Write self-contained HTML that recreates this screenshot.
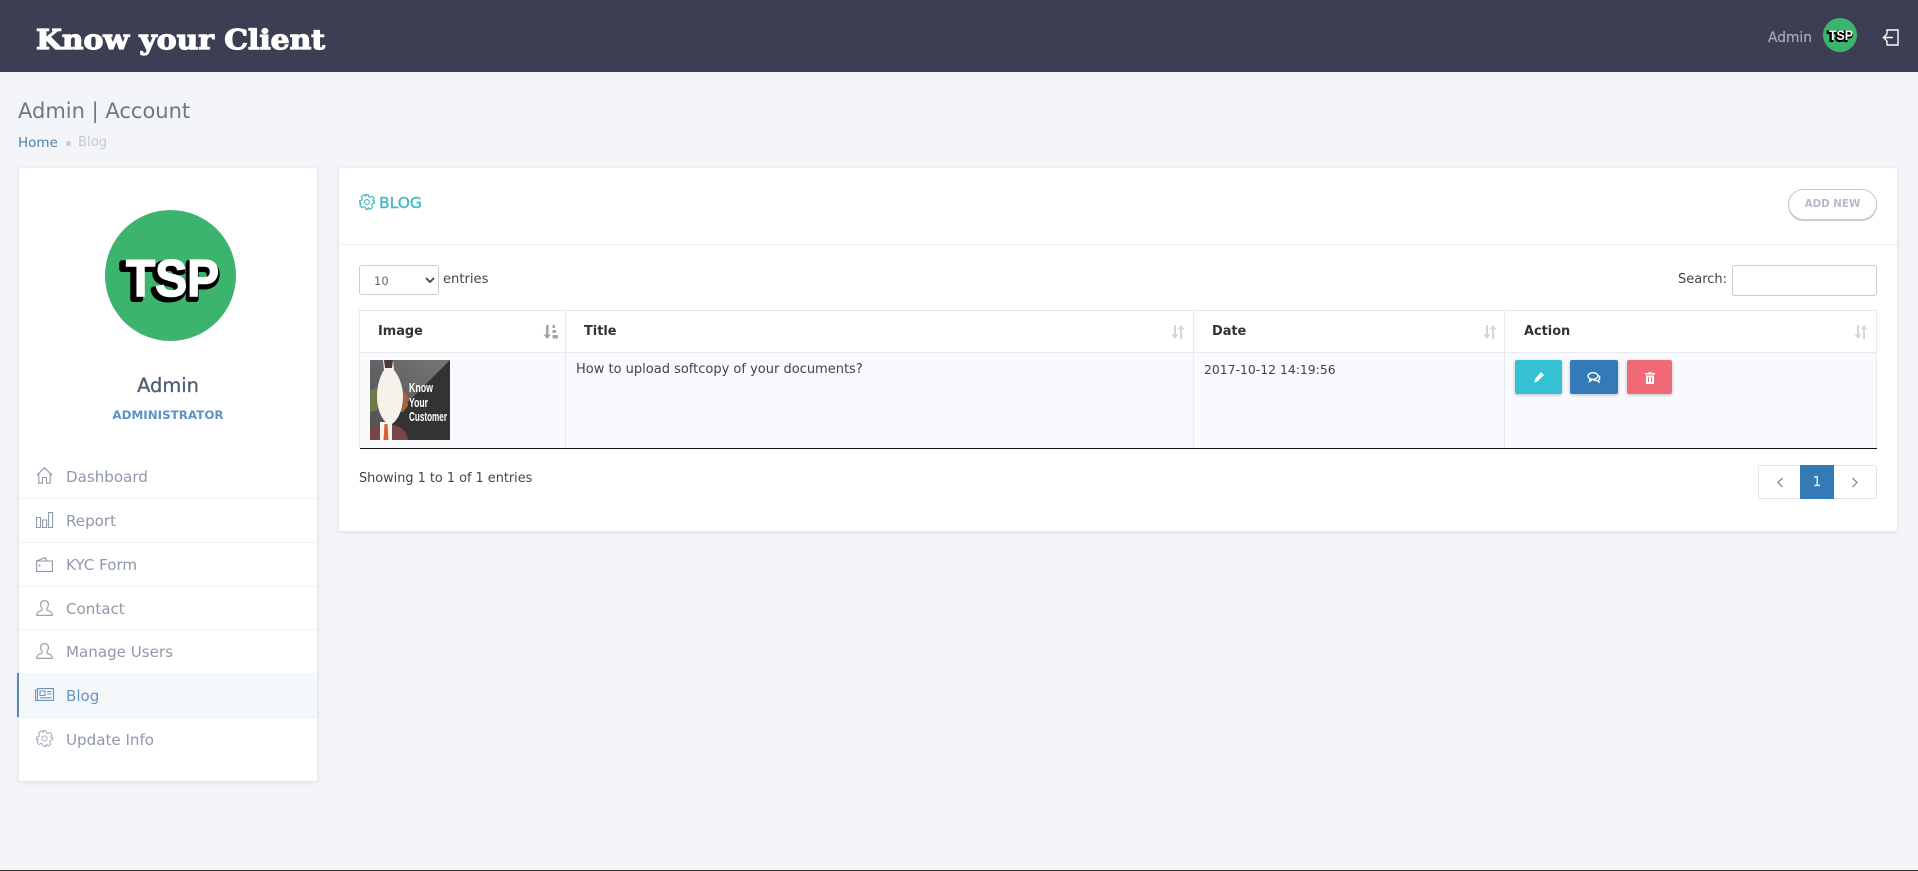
<!DOCTYPE html>
<html lang="en">
<head>
<meta charset="utf-8">
<title>Admin | Account</title>
<style>
*{box-sizing:border-box}
html,body{margin:0;padding:0}
body{width:1918px;height:871px;position:relative;overflow:hidden;background:#f3f5f9;font-family:"DejaVu Sans","Liberation Sans",sans-serif;color:#444}
.a{position:absolute;white-space:nowrap}
svg{position:absolute;display:block;overflow:visible}
.card{position:absolute;background:#fff;box-shadow:0 1px 5px rgba(40,40,70,.13);border-radius:2px}
.menu{font-size:15.1px;color:#8f98ab;height:24px;line-height:24px;left:66px}
.ic{fill:none;stroke:#8f98ab;stroke-width:1.1}
.line{position:absolute;left:19px;width:298px;height:1px;background:#edf0f4}
.th{font-size:12.9px;font-weight:bold;color:#333;height:20px;line-height:20px}
.td{font-size:13px;color:#444;height:20px;line-height:20px}
.v{position:absolute;width:1px;background:#e6e9ee}
.h{position:absolute;height:1px;background:#e6e9ee}
.btn{position:absolute;top:360px;height:34px;border-radius:2px;box-shadow:0 1px 3px rgba(0,0,0,.25)}
</style>
</head>
<body>
<header class="a" style="left:0;top:0;width:1918px;height:72px;background:#3c3f53"></header>
<svg style="left:0;top:0" width="400" height="72"><text x="36" y="49" font-family="DejaVu Serif" font-weight="bold" font-size="27" fill="#fff" stroke="#fff" stroke-width="1.2" textLength="289" lengthAdjust="spacingAndGlyphs">Know your Client</text></svg>
<div class="a" style="left:1768px;top:28px;height:20px;line-height:20px;font-size:13.8px;-webkit-text-stroke:.25px #a3a8bb;color:#a3a8bb">Admin</div>
<svg style="left:1823px;top:18px" width="34" height="34" viewBox="0 0 34 34"><circle cx="17" cy="17" r="17" fill="#3cb46e"/><text x="17" y="23" text-anchor="middle" font-family="Liberation Sans" font-weight="bold" font-size="13.5" fill="#000" stroke="#000" stroke-width="2.2" textLength="25" lengthAdjust="spacingAndGlyphs">TSP</text><text x="18" y="22" text-anchor="middle" font-family="Liberation Sans" font-weight="bold" font-size="13.5" fill="#fff" textLength="24" lengthAdjust="spacingAndGlyphs">TSP</text></svg>
<svg style="left:1882px;top:29px" width="17" height="17" viewBox="0 0 17 17" fill="none" stroke="#fff" stroke-width="1.4"><path d="M5 5V1h11v15H5v-4"/><path d="M11 8.500H1.500M5 5L1.500 8.500 5 12"/></svg>

<h1 class="a" style="left:18px;top:96px;margin:0;font-size:21px;font-weight:normal;line-height:30px;color:#6c7a80">Admin | Account</h1>
<div class="a" style="left:18px;top:133px;height:20px;line-height:20px;font-size:13.5px;color:#4f81b0">Home</div>
<div class="a" style="left:66px;top:141px;width:5px;height:5px;border-radius:50%;background:#c4ccd8"></div>
<div class="a" style="left:78px;top:133px;height:20px;line-height:20px;font-size:13.2px;color:#c4cad4">Blog</div>

<aside class="card" style="left:19px;top:168px;width:298px;height:613px"></aside>
<svg style="left:105px;top:210px" width="131" height="131" viewBox="0 0 131 131"><circle cx="65.500" cy="65.500" r="65.500" fill="#3cb46e"/><text x="65" y="89" text-anchor="middle" font-family="Liberation Sans" font-weight="bold" font-size="52" fill="#000" stroke="#000" stroke-width="6" stroke-linejoin="round" textLength="97" lengthAdjust="spacingAndGlyphs">TSP</text><text x="67.500" y="86" text-anchor="middle" font-family="Liberation Sans" font-weight="bold" font-size="52" fill="#fff" stroke="#fff" stroke-width="1.5" textLength="93" lengthAdjust="spacingAndGlyphs">TSP</text></svg>
<div class="a" style="left:19px;width:298px;top:372px;height:28px;line-height:28px;text-align:center;font-size:19.4px;-webkit-text-stroke:.3px #4f5d73;color:#4f5d73">Admin</div>
<div class="a" style="left:19px;width:298px;top:405px;height:20px;line-height:20px;text-align:center;font-size:11.9px;font-weight:bold;color:#5b92c9">ADMINISTRATOR</div>

<div class="a" style="left:19px;top:673px;width:298px;height:44px;background:#f5f8fb"></div>
<div class="a" style="left:17px;top:673px;width:2px;height:44px;background:#4f8ab8"></div>
<div class="line" style="top:498px"></div><div class="line" style="top:542px"></div><div class="line" style="top:586px"></div><div class="line" style="top:629px"></div><div class="line" style="top:717px"></div>

<svg class="ic" style="left:36px;top:467px" width="17" height="17" viewBox="0 0 17 17"><path d="M.8 8.200L8.500.8l7.700 7.400M2.800 6.800v9.400h3.700v-5.700h4v5.700h3.700V6.800"/></svg>
<div class="a menu" style="top:465px">Dashboard</div>
<svg class="ic" style="left:36px;top:512px" width="17" height="16" viewBox="0 0 17 16"><path d="M.6 5.500h4v10h-4zM6.600 8h4v7.500h-4zM12.600.6h4v14.900h-4z"/></svg>
<div class="a menu" style="top:509px">Report</div>
<svg class="ic" style="left:36px;top:557px" width="17" height="15" viewBox="0 0 17 15"><path d="M.6 14.400V4l8.500-3.400 1.500 3.400h5.800v10.400zM.6 4h10"/><circle cx="3.500" cy="8.500" r=".4"/></svg>
<div class="a menu" style="top:553px">KYC Form</div>
<svg class="ic" style="left:36px;top:600px" width="17" height="16" viewBox="0 0 17 16"><path d="M.7 15.300h15.600c0-3-2-3.900-4.200-4.600-1.200-.4-1.500-1.300-1-2.300 1-1.500 1.400-2.900 1.300-4.300C12.200 1.800 10.500.7 8.500.7S4.800 1.800 4.600 4.100c-.1 1.400.3 2.800 1.300 4.300.5 1 .2 1.900-1 2.300C2.700 11.400.7 12.300.7 15.300z"/></svg>
<div class="a menu" style="top:597px">Contact</div>
<svg class="ic" style="left:36px;top:643px" width="17" height="16" viewBox="0 0 17 16"><path d="M.7 15.300h15.600c0-3-2-3.900-4.200-4.600-1.200-.4-1.500-1.300-1-2.300 1-1.500 1.400-2.900 1.300-4.300C12.200 1.800 10.500.7 8.500.7S4.800 1.800 4.600 4.100c-.1 1.400.3 2.800 1.300 4.300.5 1 .2 1.900-1 2.300C2.700 11.400.7 12.300.7 15.300z"/></svg>
<div class="a menu" style="top:640px">Manage Users</div>
<svg style="left:35px;top:688px" width="19" height="13" viewBox="0 0 19 13" fill="none" stroke="#6a94bd" stroke-width="1.1"><path d="M2.500.6h16v11.800h-16zM2.500 2H.6v10.400h2M5 3h5v4.500H5zM12 3.500h4.500M12 6h4.500M5 9.800h11.500"/></svg>
<div class="a menu" style="top:684px;color:#6a94bd">Blog</div>
<svg class="ic" style="left:36px;top:730px" width="17" height="17" viewBox="0 0 24 24" stroke-width="1.6"><circle cx="12" cy="12" r="3.700"/><path d="M10 1h4l.7 3.200 2.200.9 2.800-1.800 2.900 2.900-1.800 2.800.9 2.200L23 10v4l-3.200.7-.9 2.200 1.800 2.800-2.900 2.900-2.800-1.800-2.200.9L14 23h-4l-.7-3.200-2.200-.9-2.800 1.800-2.900-2.900 1.800-2.800-.9-2.200L1 14v-4l3.200-.7.9-2.200-1.800-2.800 2.900-2.900 2.800 1.800 2.200-.9z"/></svg>
<div class="a menu" style="top:728px">Update Info</div>

<main class="card" style="left:339px;top:168px;width:1558px;height:363px"></main>
<div class="h" style="left:339px;top:244px;width:1558px;background:#edf0f4"></div>
<svg style="left:359px;top:194px" width="16" height="16" viewBox="0 0 24 24" fill="none" stroke="#49b8c6" stroke-width="1.700"><circle cx="12" cy="12" r="3.700"/><path d="M10 1h4l.7 3.200 2.200.9 2.800-1.800 2.900 2.900-1.800 2.800.9 2.200L23 10v4l-3.200.7-.9 2.200 1.800 2.800-2.900 2.900-2.800-1.800-2.200.9L14 23h-4l-.7-3.200-2.200-.9-2.800 1.800-2.900-2.900 1.800-2.800-.9-2.200L1 14v-4l3.200-.7.9-2.200-1.800-2.800 2.900-2.900 2.800 1.800 2.200-.9z"/></svg>
<div class="a" style="left:379px;top:192px;height:22px;line-height:22px;font-size:15.500px;-webkit-text-stroke:.4px #49b8c6;color:#49b8c6">BLOG</div>
<div class="a" style="left:1788px;top:189px;width:89px;height:31px;line-height:29px;border:1px solid #c4c8d0;border-radius:16px;box-shadow:0 1px 1px rgba(0,0,0,.22);text-align:center;font-size:10.300px;font-weight:bold;color:#b5bac5;background:#fff">ADD NEW</div>

<div class="a" style="left:359px;top:265px;width:80px;height:30px;border:1px solid #c9ccd6;border-radius:3px;background:#fff"></div>
<div class="a" style="left:374px;top:271px;height:20px;line-height:20px;font-size:11.500px;color:#666">10</div>
<svg style="left:425px;top:277px" width="10" height="7" viewBox="0 0 10 7" fill="none" stroke="#444" stroke-width="1.800"><path d="M1 1l4 4 4-4"/></svg>
<div class="a td" style="left:443px;top:270px;font-size:13.100px">entries</div>
<div class="a td" style="left:1678px;top:270px;width:48px;text-align:right;font-size:13px">Search:</div>
<div class="a" style="left:1732px;top:265px;width:145px;height:31px;border:1px solid #c9ccd6;border-radius:3px;background:#fff"></div>

<div class="a" style="left:359px;top:352px;width:1518px;height:96px;background:#f9fafd"></div>
<div class="h" style="left:359px;top:310px;width:1518px"></div>
<div class="h" style="left:359px;top:352px;width:1518px"></div>
<div class="v" style="left:359px;top:310px;height:138px"></div>
<div class="v" style="left:565px;top:310px;height:138px"></div>
<div class="v" style="left:1193px;top:310px;height:138px"></div>
<div class="v" style="left:1504px;top:310px;height:138px"></div>
<div class="v" style="left:1876px;top:310px;height:138px"></div>
<div class="a" style="left:360px;top:448px;width:1517px;height:1px;background:#111"></div>

<div class="a th" style="left:378px;top:322px">Image</div>
<div class="a th" style="left:584px;top:322px">Title</div>
<div class="a th" style="left:1212px;top:322px">Date</div>
<div class="a th" style="left:1524px;top:322px">Action</div>

<svg style="left:543px;top:325px" width="15" height="14" viewBox="0 0 15 14" fill="#a5a5a5"><path d="M3 0h2.500v9.500H8L4.200 14 .5 9.500H3z"/><path d="M9.500 0h2.500v3H9.500zM9.500 5h3.500v3H9.500zM9.500 10h5.500v3.500H9.500z"/></svg>
<svg style="left:1171px;top:325px" width="14" height="14" viewBox="0 0 14 14" fill="#d5d6d8"><path d="M3 0h2v9.500h2.500L4 14 .5 9.500H3zM9 14h2V4.500h2.500L10 0 6.500 4.500H9z"/></svg>
<svg style="left:1483px;top:325px" width="14" height="14" viewBox="0 0 14 14" fill="#d5d6d8"><path d="M3 0h2v9.500h2.500L4 14 .5 9.500H3zM9 14h2V4.500h2.500L10 0 6.500 4.500H9z"/></svg>
<svg style="left:1854px;top:325px" width="14" height="14" viewBox="0 0 14 14" fill="#d5d6d8"><path d="M3 0h2v9.500h2.500L4 14 .5 9.500H3zM9 14h2V4.500h2.500L10 0 6.500 4.500H9z"/></svg>

<svg style="left:370px;top:360px" width="80" height="80" viewBox="0 0 80 80">
<defs><linearGradient id="g" x1="0" y1="1" x2="1" y2="0"><stop offset="0" stop-color="#505050"/><stop offset="1" stop-color="#777"/></linearGradient></defs>
<rect width="80" height="80" fill="#333"/>
<path d="M0 0H80L0 80z" fill="url(#g)"/>
<path d="M0 70c4-3 8-4 12-5h12c5 1 9 4 12 8l2 7H0z" fill="#7a4448"/>
<path d="M0 30l7-2 3 12-3 10-7 2z" fill="#6d7a4a"/>
<path d="M23 34l7-4 7 4 1 12-5 6-9-2z" fill="#a7623f"/>
<path d="M25 40l4-6 4 6-4 6z" fill="#eea738"/>
<path d="M13 0h10l1 10c5 6 9 16 9 26 0 14-5 24-11 28h-4C12 60 7 50 7 36c0-10 3-20 7-26z" fill="#f4f2ea"/>
<path d="M14 0h9l-1 8h-7z" fill="#4a3a3e"/>
<path d="M10 62h12v18H10z" fill="#f5f5f0"/>
<path d="M14.500 64h3l1 16h-5z" fill="#d9612f"/>
<text x="39" y="32" font-family="Liberation Sans" font-weight="bold" font-size="13" fill="#fff" textLength="24" lengthAdjust="spacingAndGlyphs">Know</text>
<text x="39" y="47" font-family="Liberation Sans" font-weight="bold" font-size="13" fill="#fff" textLength="19" lengthAdjust="spacingAndGlyphs">Your</text>
<text x="39" y="61" font-family="Liberation Sans" font-weight="bold" font-size="13" fill="#fff" textLength="38" lengthAdjust="spacingAndGlyphs">Customer</text>
</svg>

<div class="a td" style="left:576px;top:360px">How to upload softcopy of your documents?</div>
<div class="a td" style="left:1204px;top:360px;font-size:12.400px">2017-10-12 14:19:56</div>

<div class="btn" style="left:1515px;width:47px;background:#33c1d3"></div>
<svg style="left:1533px;top:371px" width="12" height="12" viewBox="0 0 12 12" fill="#fff"><path d="M8 1l3 3-6.500 6.500L1 11.500l1-3.500z"/></svg>
<div class="btn" style="left:1570px;width:48px;background:#337ab7"></div>
<svg style="left:1587px;top:372px" width="14" height="11" viewBox="0 0 14 11" fill="none" stroke="#fff" stroke-width="1.300"><ellipse cx="6" cy="4" rx="5" ry="3.300"/><path d="M3 7l-.5 2.500L5.500 7.500M11.500 3.500c2 1.500 1.500 3.500 0 4.500l.5 2-2.500-1.500c-1 0-2 0-3-.8"/></svg>
<div class="btn" style="left:1627px;width:45px;background:#f16a78"></div>
<svg style="left:1645px;top:372px" width="10" height="12" viewBox="0 0 10 12" fill="#fff"><path d="M3.500 0h3v1H10v1.500H0V1h3.500zM1 3.500h8V12H1zM3 5v5h1V5zM6 5v5h1V5z" fill-rule="evenodd"/></svg>

<div class="a td" style="left:359px;top:469px;font-size:12.850px">Showing 1 to 1 of 1 entries</div>

<div class="a" style="left:1758px;top:465px;width:119px;height:34px;border:1px solid #e2e4e8;border-radius:3px;background:#fff"></div>
<div class="a" style="left:1800px;top:465px;width:34px;height:34px;background:#337ab7;color:#dcebf7;text-align:center;line-height:36px;font-size:13px;-webkit-text-stroke:.3px #dcebf7">1</div>
<svg style="left:1777px;top:477px" width="7" height="11" viewBox="0 0 7 11" fill="none" stroke="#777" stroke-width="1.100"><path d="M5.500 1L1 5.500 5.500 10"/></svg>
<svg style="left:1851px;top:477px" width="7" height="11" viewBox="0 0 7 11" fill="none" stroke="#777" stroke-width="1.100"><path d="M1.500 1L6 5.500 1.500 10"/></svg>

<div class="a" style="left:0;top:870px;width:1918px;height:1px;background:#333"></div>
</body>
</html>
